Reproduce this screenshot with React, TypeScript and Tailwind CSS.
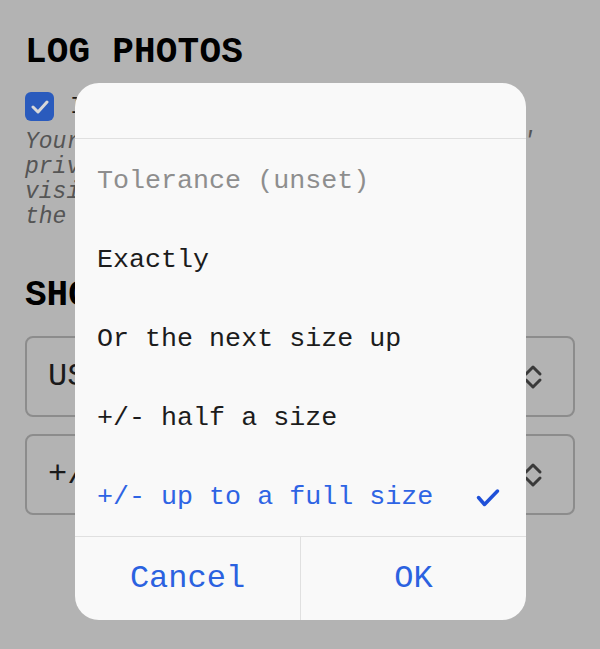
import React, { useState } from 'react';

const MONO = '"Courier New", "Nimbus Mono PS", "FreeMono", "Liberation Mono", monospace';

const options = [
  'Exactly',
  'Or the next size up',
  '+/- half a size',
  '+/- up to a full size',
];

const Chevrons: React.FC = () => (
  <svg width="20" height="26" viewBox="0 0 20 26" fill="none" stroke="#3a3a3a" strokeWidth="3" strokeLinecap="round" strokeLinejoin="round">
    <path d="M3 10 L10 3 L17 10" />
    <path d="M3 16 L10 23 L17 16" />
  </svg>
);

const Check: React.FC = () => (
  <svg width="24" height="20" viewBox="0 0 24 20" fill="none" stroke="#1f50d8" strokeWidth="3.5" strokeLinecap="round" strokeLinejoin="round">
    <path d="M2.5 9.5 L8.5 16.5 L21.5 3" />
  </svg>
);

const App: React.FC = () => {
  const [selected, setSelected] = useState(3);

  return (
    <div className="relative h-[649px] w-[600px] overflow-hidden bg-[#b3b3b3]" style={{ fontFamily: MONO }}>
      {/* page behind the dialog */}
      <div className="flex flex-col px-[25px] pt-[35px]">
        <h1 className="text-[36px] font-bold leading-[36px] tracking-[0.2px] text-black">LOG PHOTOS</h1>
        <label className="mt-[21px] flex items-center gap-[16px]">
          <span className="flex h-[29px] w-[29px] items-center justify-center rounded-[6px] bg-[#2a5bbd]">
            <svg width="18" height="14" viewBox="0 0 18 14" fill="none" stroke="#d8d8d8" strokeWidth="3" strokeLinecap="round" strokeLinejoin="round">
              <path d="M2 7 L7 12 L16 2" />
            </svg>
          </span>
          <span className="text-[24px] leading-[29px] text-[#1a1a1a]">Include photos</span>
        </label>
        <div className="mt-[9px] text-[23px] italic leading-[25px] text-[#555555]">
          <div className="whitespace-nowrap">Your photos are private. Other users'</div>
          <div className="whitespace-nowrap">privacy is respected too.</div>
          <div className="whitespace-nowrap">visible only to you.</div>
          <div className="whitespace-nowrap">the community.</div>
        </div>
        <h2 className="mt-[48px] text-[36px] font-bold leading-[36px] text-black">SHOE SIZE</h2>
        <div className="mt-[22px] flex h-[81px] items-center justify-between rounded-[8px] border-2 border-[#8c8c8c] pl-[21px] pr-[30px]">
          <span className="text-[32px] text-[#1a1a1a]">US 10</span>
          <Chevrons />
        </div>
        <div className="mt-[17px] flex h-[81px] items-center justify-between rounded-[8px] border-2 border-[#8c8c8c] pl-[21px] pr-[30px]">
          <span className="text-[32px] text-[#1a1a1a]">+/- 1</span>
          <Chevrons />
        </div>
      </div>

      {/* picker dialog */}
      <div className="absolute left-[75px] top-[83px] flex h-[537px] w-[451px] flex-col overflow-hidden rounded-[24px] bg-[#f9f9f9]">
        <div className="h-[56px] shrink-0 border-b border-[#e0e0e0]" />
        <div className="flex flex-col pb-[2px]">
          <div className="flex h-[79px] items-center pl-[22px] pt-[6px] text-[26.7px] text-[#8e8e8e]">Tolerance (unset)</div>
          {options.map((label, i) => (
            <button
              key={label}
              onClick={() => setSelected(i)}
              className={`flex h-[79px] items-center justify-between pl-[22px] pr-[26px] pt-[6px] text-left text-[26.7px] ${
                selected === i ? 'text-[#2e64e4]' : 'text-[#1c1c1c]'
              }`}
            >
              <span>{label}</span>
              {selected === i && <Check />}
            </button>
          ))}
        </div>
        <div className="flex flex-1 border-t border-[#e0e0e0]">
          <button className="flex flex-1 items-center justify-center text-[32px] text-[#2b62e0]">Cancel</button>
          <div className="w-px bg-[#e0e0e0]" />
          <button className="flex flex-1 items-center justify-center text-[32px] text-[#2b62e0]">OK</button>
        </div>
      </div>
    </div>
  );
};

export default App;
